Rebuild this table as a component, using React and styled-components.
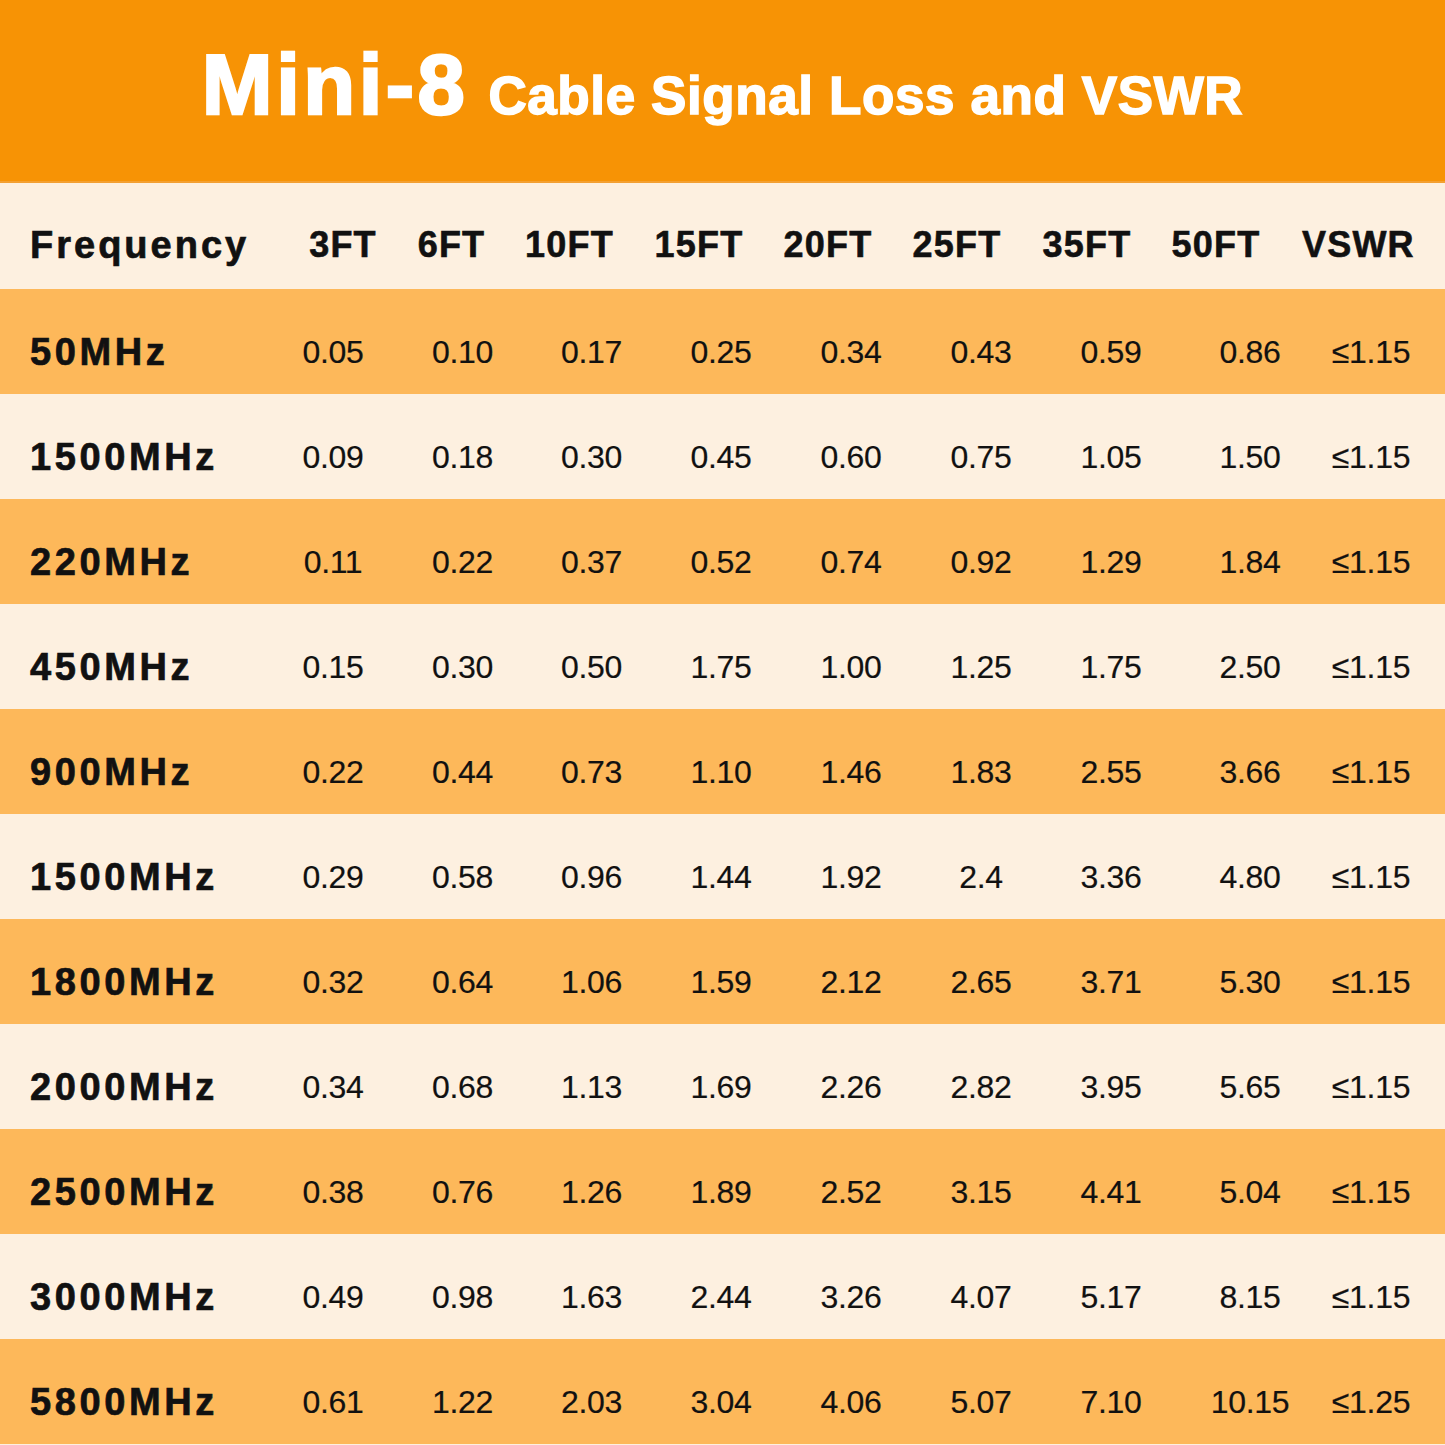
import React from "react";
import styled, { createGlobalStyle } from "styled-components";

const Global = createGlobalStyle`
  html, body { margin: 0; padding: 0; background: #fdf0e0; }
  body { font-family: "Liberation Sans", Arial, sans-serif; }
`;

const COLS = "268px 130px 129px 129px 130px 130px 130px 130px 148px 94px 1fr";

const Page = styled.div`
  width: 1445px;
  height: 1445px;
  overflow: hidden;
  display: flex;
  flex-direction: column;
  background: #fdf0e0;
`;

const Banner = styled.header`
  height: 183px;
  box-sizing: border-box;
  background: #f79305;
  border-bottom: 2px solid #f3a032;
  display: flex;
  align-items: baseline;
  justify-content: center;
  padding-top: 42px;
  gap: 20px;
  color: #ffffff;
  font-family: "Liberation Sans", Arial, sans-serif;
  font-weight: 700;
`;

const BigTitle = styled.span`
  font-size: 85px;
  line-height: 1;
  letter-spacing: 3.5px;
  -webkit-text-stroke: 2.5px #ffffff;
`;

const SubTitle = styled.span`
  font-size: 53px;
  line-height: 1;
  letter-spacing: 0.6px;
  -webkit-text-stroke: 1.5px #ffffff;
`;

const Row = styled.div`
  display: grid;
  grid-template-columns: ${COLS};
  align-items: center;
  height: ${(p) => p.$h}px;
  box-sizing: border-box;
  padding-top: ${(p) => p.$pt}px;
  background: ${(p) => (p.$tone === "orange" ? "#fdb85a" : "#fdf0e0")};
  color: #111111;
`;

const Label = styled.div`
  padding-left: 30px;
  font-size: ${(p) => p.$size}px;
  font-weight: 700;
  letter-spacing: ${(p) => p.$ls}px;
  white-space: nowrap;
  -webkit-text-stroke: 0.7px #111111;
`;

const HeadCell = styled.div`
  text-align: center;
  font-size: 36px;
  font-weight: 700;
  letter-spacing: 1.2px;
  white-space: nowrap;
  -webkit-text-stroke: 0.6px #111111;
  transform: translateX(${(p) => p.$shift}px);
`;

const Cell = styled.div`
  text-align: center;
  font-size: 32px;
  font-weight: 400;
  white-space: nowrap;
  letter-spacing: -0.3px;
  -webkit-text-stroke: 0.2px #111111;
`;

const headers = ["3FT", "6FT", "10FT", "15FT", "20FT", "25FT", "35FT", "50FT", "VSWR"];
const shifts = [10, -11, -22, -22, -23, -24, -24, -34, -22];

const rows = [
  ["50MHz", "0.05", "0.10", "0.17", "0.25", "0.34", "0.43", "0.59", "0.86", "≤1.15"],
  ["1500MHz", "0.09", "0.18", "0.30", "0.45", "0.60", "0.75", "1.05", "1.50", "≤1.15"],
  ["220MHz", "0.11", "0.22", "0.37", "0.52", "0.74", "0.92", "1.29", "1.84", "≤1.15"],
  ["450MHz", "0.15", "0.30", "0.50", "1.75", "1.00", "1.25", "1.75", "2.50", "≤1.15"],
  ["900MHz", "0.22", "0.44", "0.73", "1.10", "1.46", "1.83", "2.55", "3.66", "≤1.15"],
  ["1500MHz", "0.29", "0.58", "0.96", "1.44", "1.92", "2.4", "3.36", "4.80", "≤1.15"],
  ["1800MHz", "0.32", "0.64", "1.06", "1.59", "2.12", "2.65", "3.71", "5.30", "≤1.15"],
  ["2000MHz", "0.34", "0.68", "1.13", "1.69", "2.26", "2.82", "3.95", "5.65", "≤1.15"],
  ["2500MHz", "0.38", "0.76", "1.26", "1.89", "2.52", "3.15", "4.41", "5.04", "≤1.15"],
  ["3000MHz", "0.49", "0.98", "1.63", "2.44", "3.26", "4.07", "5.17", "8.15", "≤1.15"],
  ["5800MHz", "0.61", "1.22", "2.03", "3.04", "4.06", "5.07", "7.10", "10.15", "≤1.25"],
];

export default function App() {
  return (
    <Page>
      <Global />
      <Banner>
        <BigTitle>Mini-8</BigTitle>
        <SubTitle>Cable Signal Loss and VSWR</SubTitle>
      </Banner>
      <Row $h={106} $pt={18} $tone="cream">
        <Label $size={38} $ls={3}>Frequency</Label>
        {headers.map((h, i) => (
          <HeadCell key={h} $shift={shifts[i]}>{h}</HeadCell>
        ))}
      </Row>
      {rows.map((r, i) => (
        <Row key={i} $h={105} $pt={22} $tone={i % 2 === 0 ? "orange" : "cream"}>
          <Label $size={38} $ls={3.6}>{r[0]}</Label>
          {r.slice(1).map((v, j) => (
            <Cell key={j}>{v}</Cell>
          ))}
        </Row>
      ))}
    </Page>
  );
}
